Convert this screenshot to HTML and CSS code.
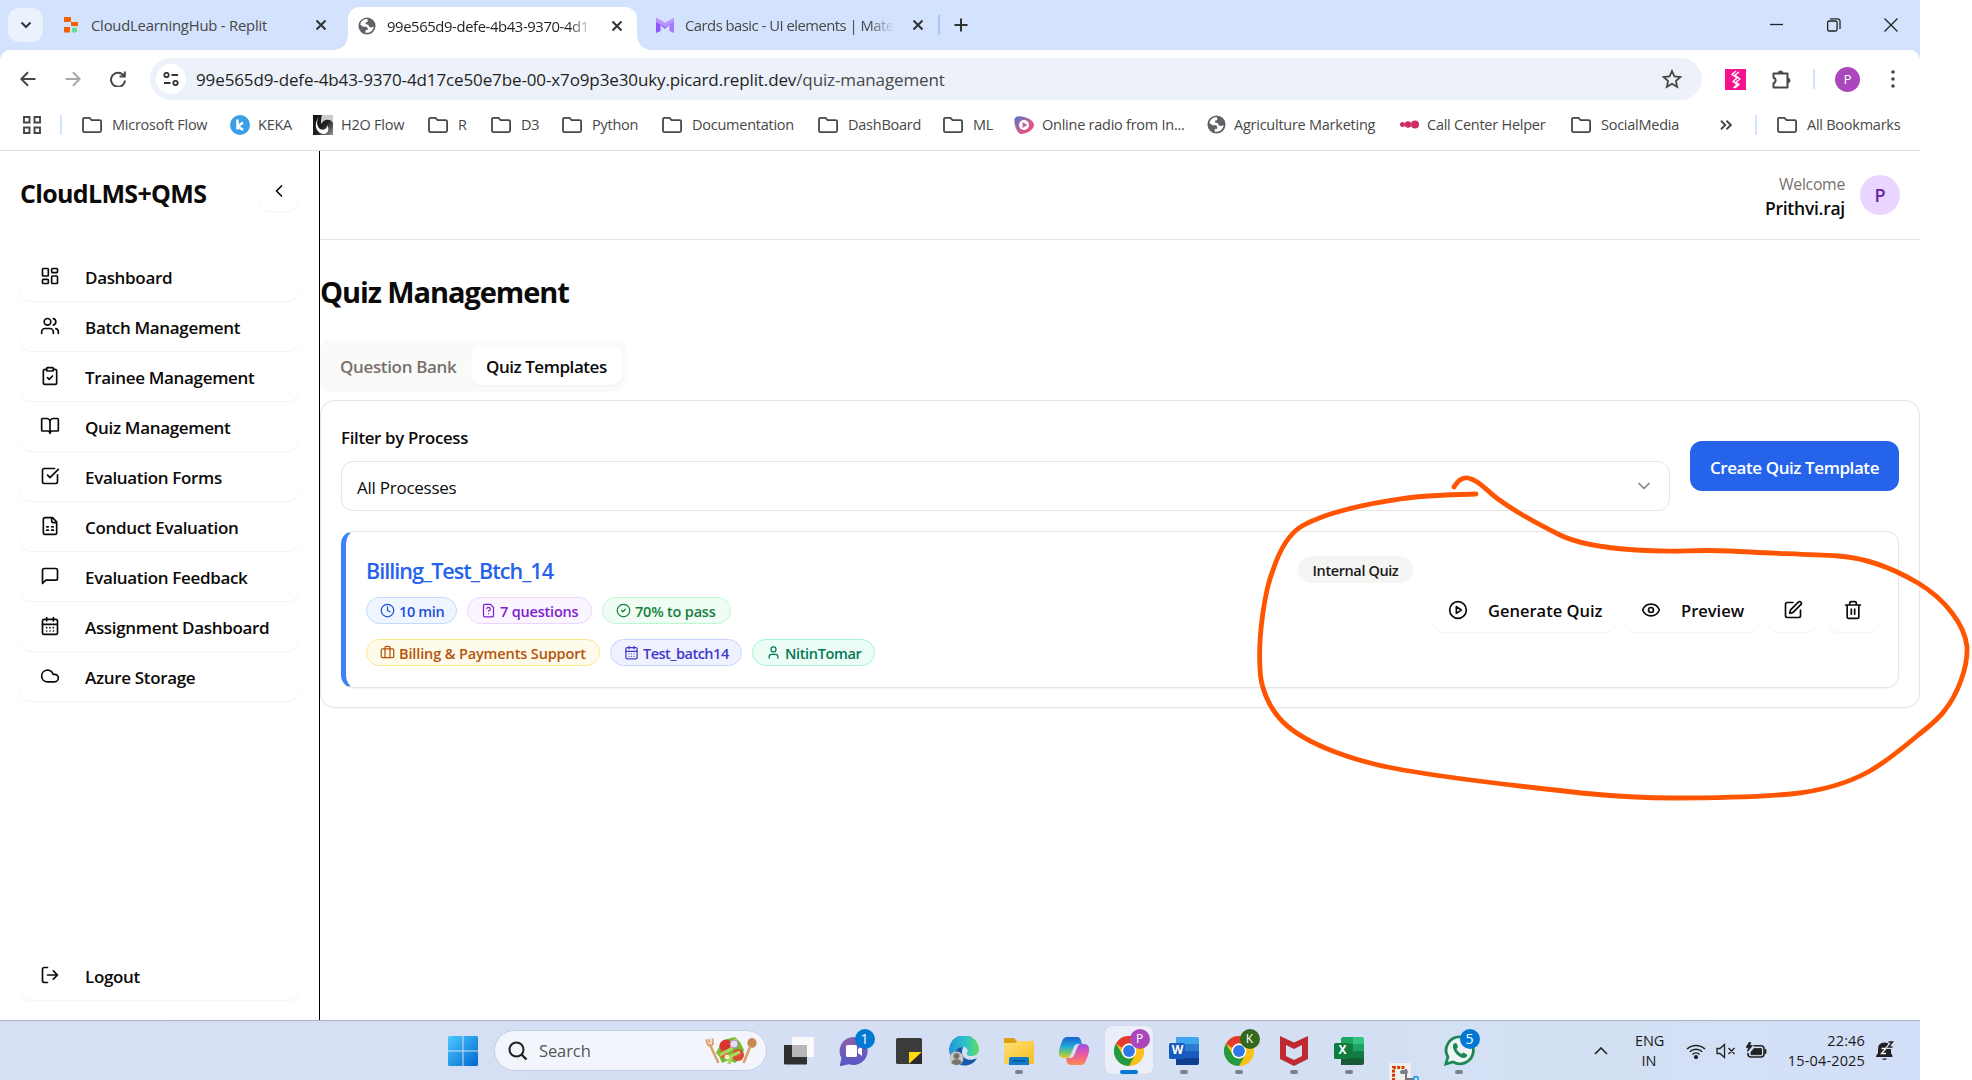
FILE: index.html
```html
<!DOCTYPE html>
<html lang="en">
<head>
<meta charset="utf-8">
<title>Quiz Management</title>
<link rel="stylesheet" href="styles.css">
</head>
<body>
<svg class="sprite" aria-hidden="true">
  <defs>
    <linearGradient id="g-win" x1="0" y1="0" x2="1" y2="1"><stop offset="0" stop-color="#4ccaff"/><stop offset="1" stop-color="#0067cf"/></linearGradient>
    <linearGradient id="g-radio" x1="0" y1="0" x2="1" y2="1"><stop offset="0" stop-color="#5078cc"/><stop offset=".6" stop-color="#d25a8c"/><stop offset="1" stop-color="#f0506e"/></linearGradient>
    <linearGradient id="g-h2o" x1="0" y1="0" x2="1" y2="1"><stop offset="0" stop-color="#111"/><stop offset=".55" stop-color="#222"/><stop offset="1" stop-color="#999"/></linearGradient>
    <linearGradient id="g-chat" x1="0" y1="0" x2="0" y2="1"><stop offset="0" stop-color="#8f5fa8"/><stop offset="1" stop-color="#5558c8"/></linearGradient>
    <linearGradient id="g-edge" x1="0" y1="0" x2="1" y2="0"><stop offset="0" stop-color="#2494d8"/><stop offset=".55" stop-color="#2cc3c9"/><stop offset="1" stop-color="#62de5a"/></linearGradient>
    <linearGradient id="g-fold" x1="0" y1="0" x2="1" y2="1"><stop offset="0" stop-color="#ffe07a"/><stop offset="1" stop-color="#f9bd1d"/></linearGradient>
    <linearGradient id="g-cop1" x1="0" y1="0" x2="0" y2="1"><stop offset="0" stop-color="#1b62cf"/><stop offset=".45" stop-color="#22a8dc"/><stop offset=".8" stop-color="#8bc854"/><stop offset="1" stop-color="#f3c52d"/></linearGradient>
    <linearGradient id="g-cop2" x1="0" y1="0" x2="0" y2="1"><stop offset="0" stop-color="#9c4ce8"/><stop offset=".5" stop-color="#ea5ba0"/><stop offset="1" stop-color="#ff8a4c"/></linearGradient>
  </defs>
  <symbol id="folder" viewBox="0 0 22 18"><path d="M2 3.2C2 2.3 2.6 1.8 3.4 1.8h5l2.2 2.4h8c.9 0 1.5.6 1.5 1.4v9c0 .9-.6 1.5-1.5 1.5H3.4c-.8 0-1.4-.6-1.4-1.5z"/></symbol>
  <symbol id="globe" viewBox="0 0 20 20"><circle cx="10" cy="10" r="9.500" fill="#5f6368"/><path d="M10.500 2.300C6 2 3 5 2.600 8.500l3.200 2.200h3.400l1.600 1.500v2.300l-2.600.3v2.700c5 .8 9-2.500 9.200-7l-2.600 1.200-2.300-.6-1-2.600-2.800-.4-.4-2 2.600-.8z" fill="#fff"/></symbol>
  <symbol id="i-x" viewBox="0 0 12 12"><path d="m1.500 1.500 9 9m0-9-9 9"/></symbol>
  <symbol id="l-dash" viewBox="0 0 24 24"><rect x="3" y="3" width="7" height="9" rx="1"/><rect x="14" y="3" width="7" height="5" rx="1"/><rect x="14" y="12" width="7" height="9" rx="1"/><rect x="3" y="16" width="7" height="5" rx="1"/></symbol>
  <symbol id="l-users" viewBox="0 0 24 24"><path d="M16 21v-2a4 4 0 0 0-4-4H6a4 4 0 0 0-4 4v2"/><circle cx="9" cy="7" r="4"/><path d="M22 21v-2a4 4 0 0 0-3-3.870M16 3.130a4 4 0 0 1 0 7.750"/></symbol>
  <symbol id="l-clip" viewBox="0 0 24 24"><rect x="8" y="2" width="8" height="4" rx="1"/><path d="M16 4h2a2 2 0 0 1 2 2v14a2 2 0 0 1-2 2H6a2 2 0 0 1-2-2V6a2 2 0 0 1 2-2h2m1 10 2 2 4-4"/></symbol>
  <symbol id="l-book" viewBox="0 0 24 24"><path d="M12 7v14M3 18a1 1 0 0 1-1-1V4a1 1 0 0 1 1-1h5a4 4 0 0 1 4 4 4 4 0 0 1 4-4h5a1 1 0 0 1 1 1v13a1 1 0 0 1-1 1h-6a3 3 0 0 0-3 3 3 3 0 0 0-3-3z"/></symbol>
  <symbol id="l-check" viewBox="0 0 24 24"><path d="M21 10.500V19a2 2 0 0 1-2 2H5a2 2 0 0 1-2-2V5a2 2 0 0 1 2-2h12.500M9 11l3 3L22 4"/></symbol>
  <symbol id="l-sheet" viewBox="0 0 24 24"><path d="M15 2H6a2 2 0 0 0-2 2v16a2 2 0 0 0 2 2h12a2 2 0 0 0 2-2V7ZM14 2v4a2 2 0 0 0 2 2h4M8 13h2M14 13h2M8 17h2M14 17h2"/></symbol>
  <symbol id="l-msg" viewBox="0 0 24 24"><path d="M21 15a2 2 0 0 1-2 2H7l-4 4V5a2 2 0 0 1 2-2h14a2 2 0 0 1 2 2z"/></symbol>
  <symbol id="l-cal" viewBox="0 0 24 24"><path d="M8 2v4M16 2v4M3 10h18M8 14h.01M12 14h.01M16 14h.01M8 18h.01M12 18h.01M16 18h.01"/><rect x="3" y="4" width="18" height="18" rx="2"/></symbol>
  <symbol id="l-cloud" viewBox="0 0 24 24"><path d="M17.500 19H9a7 7 0 1 1 6.710-9h1.790a4.500 4.500 0 1 1 0 9Z"/></symbol>
  <symbol id="l-out" viewBox="0 0 24 24"><path d="M9 21H5a2 2 0 0 1-2-2V5a2 2 0 0 1 2-2h4M16 17l5-5-5-5M21 12H9"/></symbol>
  <symbol id="l-clock" viewBox="0 0 24 24"><circle cx="12" cy="12" r="10"/><path d="M12 6v6l4 2"/></symbol>
  <symbol id="l-fileq" viewBox="0 0 24 24"><path d="M12 17h.01M15 2H6a2 2 0 0 0-2 2v16a2 2 0 0 0 2 2h12a2 2 0 0 0 2-2V7zM9.100 9a3 3 0 0 1 5.820 1c0 2-3 3-3 3"/></symbol>
  <symbol id="l-ok" viewBox="0 0 24 24"><circle cx="12" cy="12" r="10"/><path d="m9 12 2 2 4-4"/></symbol>
  <symbol id="l-case" viewBox="0 0 24 24"><path d="M16 20V4a2 2 0 0 0-2-2h-4a2 2 0 0 0-2 2v16"/><rect x="2" y="6" width="20" height="14" rx="2"/></symbol>
  <symbol id="l-user" viewBox="0 0 24 24"><path d="M19 21v-2a4 4 0 0 0-4-4H9a4 4 0 0 0-4 4v2"/><circle cx="12" cy="7" r="4"/></symbol>
  <symbol id="l-play" viewBox="0 0 24 24"><circle cx="12" cy="12" r="10"/><path d="m10 8 6 4-6 4z"/></symbol>
  <symbol id="l-eye" viewBox="0 0 24 24"><path d="M2.062 12.348a1 1 0 0 1 0-.696 10.750 10.750 0 0 1 19.876 0 1 1 0 0 1 0 .696 10.750 10.750 0 0 1-19.876 0"/><circle cx="12" cy="12" r="3"/></symbol>
  <symbol id="l-pen" viewBox="0 0 24 24"><path d="M12 3H5a2 2 0 0 0-2 2v14a2 2 0 0 0 2 2h14a2 2 0 0 0 2-2v-7"/><path d="M18.375 2.625a1 1 0 0 1 3 3l-9.013 9.014a2 2 0 0 1-.853.505l-2.873.840a.5.5 0 0 1-.620-.620l.840-2.873a2 2 0 0 1 .506-.852z"/></symbol>
  <symbol id="l-trash" viewBox="0 0 24 24"><path d="M3 6h18M19 6v14c0 1-1 2-2 2H7c-1 0-2-1-2-2V6M8 6V4c0-1 1-2 2-2h4c1 0 2 1 2 2v2M10 11v6M14 11v6"/></symbol>
  <symbol id="l-down" viewBox="0 0 24 24"><path d="m6 9 6 6 6-6"/></symbol>
  <symbol id="l-left" viewBox="0 0 24 24"><path d="m15 18-6-6 6-6"/></symbol>
  <symbol id="chrome" viewBox="0 0 30 30"><circle cx="15" cy="15" r="15" fill="#fbc116"/><path d="M2 7.500A15 15 0 0 1 28 7.500H15a7.500 7.500 0 0 0-6.800 4.500z" fill="#e33b2e"/><path d="M2 7.500A15 15 0 0 0 15 30l6.500-11.200a7.500 7.500 0 0 1-13 0z" fill="#249a41"/><path d="M15 7.500h13A15 15 0 0 1 15 30l6.500-11.200A7.500 7.500 0 0 0 15 7.500z" fill="#fbc116"/><circle cx="15" cy="15" r="7.400" fill="#fff"/><circle cx="15" cy="15" r="5.900" fill="#2f78ea"/></symbol>
</svg>

<div class="screen">
  <header class="tabstrip">
    <button class="tabsearch"><svg width="12" height="8" viewBox="0 0 12 8"><path d="m1.500 1.500 4.500 4.500 4.500-4.500"/></svg></button>
    <div class="tab tab-a">
      <svg class="fav" width="14" height="16" viewBox="0 0 14 16"><path d="M0 0h7v5H0zM7 5h7v4H7zM0 10h6v5.500H0z" fill="#f26207"/><circle cx="10.500" cy="13" r="2.700" fill="#6bd98a"/></svg>
      <span class="tabtext">CloudLearningHub - Replit</span>
      <svg class="close" width="12" height="12"><use href="#i-x"/></svg>
    </div>
    <div class="tab tab-b">
      <svg class="fav" width="18" height="18"><use href="#globe"/></svg>
      <span class="tabtext fade">99e565d9-defe-4b43-9370-4d1</span>
      <svg class="close" width="12" height="12"><use href="#i-x"/></svg>
    </div>
    <div class="tab tab-c">
      <svg class="fav" width="18" height="15" viewBox="0 0 18 15"><path d="M0 0 9 5v6L4.500 7v6L0 15z" fill="#9155fd"/><path d="m18 0-9 5v6l4.500-4v6l4.500 2z" fill="#a877ff"/><path d="m0 0 9 5 9-5v4L9 9 0 4z" fill="#bb94ff"/></svg>
      <span class="tabtext fade">Cards basic - UI elements | Mate</span>
      <svg class="close" width="12" height="12"><use href="#i-x"/></svg>
    </div>
    <i class="tabsep"></i>
    <svg class="plus" width="14" height="14" viewBox="0 0 14 14"><path d="M7 .5v13M.5 7h13"/></svg>
    <div class="wincontrols">
      <svg width="14" height="14" viewBox="0 0 14 14"><path d="M0 6.500h13"/></svg>
      <svg width="14" height="14" viewBox="0 0 14 14"><rect x=".6" y="3" width="9.500" height="10" rx="1.500"/><path d="M3 .8h7.500A2.500 2.500 0 0 1 13 3.300V11"/></svg>
      <svg width="14" height="14" viewBox="0 0 14 14"><path d="m.5.5 13 13m0-13-13 13"/></svg>
    </div>
  </header>

  <div class="toolbar">
    <svg class="tb" width="16" height="16" viewBox="0 0 16 16"><path d="M15.500 8H1.500M8 1.200 1.300 8 8 14.800"/></svg>
    <svg class="tb off" width="16" height="16" viewBox="0 0 16 16"><path d="M.5 8h14M8 1.200 14.700 8 8 14.800"/></svg>
    <svg class="tb" width="16" height="16" viewBox="0 0 16 16"><path d="M13.800 4.800A7 7 0 1 0 15 9.500M14.800.5v5H9.500"/></svg>
    <div class="omnibox">
      <span class="site"><svg width="16" height="14" viewBox="0 0 16 14"><path d="M8.500 3H15M1 11h6.500"/><circle cx="3.500" cy="3" r="2.200"/><circle cx="12.500" cy="11" r="2.200"/></svg></span>
      <span class="url">99e565d9-defe-4b43-9370-4d17ce50e7be-00-x7o9p3e30uky.picard.replit.dev<span>/quiz-management</span></span>
      <svg class="star" width="20" height="20" viewBox="0 0 20 20"><path d="m10 2 2.400 5.500 6 .5-4.500 4 1.300 5.800L10 14.700l-5.200 3.100L6.100 12 1.600 8l6-.5z"/></svg>
    </div>
    <svg class="pink" width="21" height="21" viewBox="0 0 21 21"><path d="M0 0h21v21H0z" fill="#f5128c"/><path d="m11 2-4 3.500 5 3.500-4 3.500 4 3-3.500 3.500M14 3l-4 3 5 4-4 3 3 2.500-4 3.500" fill="none" stroke="#fff" stroke-width="1.300"/></svg>
    <svg class="puzzle" width="21" height="21" viewBox="0 0 21 21"><path d="M2.500 4.500h14v14h-14v-4.300a2.800 2.800 0 0 0 0-5.400z" fill="none" stroke="#474747" stroke-width="2" stroke-linejoin="round"/><path d="M7 4.500a2.500 2.500 0 0 1 5 0zM16.500 9a2.500 2.500 0 0 1 0 5z" fill="#474747" stroke="#474747"/></svg>
    <i class="vsep"></i>
    <span class="profile">P</span>
    <svg class="dots" width="6" height="18" viewBox="0 0 6 18"><circle cx="3" cy="2" r="1.800"/><circle cx="3" cy="9" r="1.800"/><circle cx="3" cy="16" r="1.800"/></svg>
  </div>

  <nav class="bookmarks">
    <svg class="apps" width="18" height="18" viewBox="0 0 18 18"><path d="M1 1h5.500v5.500H1zM11.500 1H17v5.500h-5.500zM1 11.500h5.500V17H1zM11.500 11.500H17V17h-5.500z"/></svg>
    <i class="vsep"></i>
    <a><svg class="fo"><use href="#folder"/></svg>Microsoft Flow</a>
    <a class="site-bm"><svg width="20" height="20" viewBox="0 0 20 20"><circle cx="10" cy="10" r="10" fill="#3a9fe6"/><path d="M7.500 4.500v10M13 7.500l-5 3.800 5 3.700" stroke="#fff" stroke-width="2.500" fill="none"/></svg>KEKA</a>
    <a class="site-bm"><svg width="20" height="20" viewBox="0 0 20 20"><path d="M0 0h20v20H0z" fill="url(#g-h2o)"/><path d="M8 0C3 4 3 11 7 14c4 2 8-1 7-4 3 4 1 9-4 9C3 18-1 8 8 0z" fill="#fff"/><path d="M9 0h11v8c-3-5-9-4-12 1C8 5 8 3 9 0z" fill="#ccc"/></svg>H2O Flow</a>
    <a><svg class="fo"><use href="#folder"/></svg>R</a>
    <a><svg class="fo"><use href="#folder"/></svg>D3</a>
    <a><svg class="fo"><use href="#folder"/></svg>Python</a>
    <a><svg class="fo"><use href="#folder"/></svg>Documentation</a>
    <a><svg class="fo"><use href="#folder"/></svg>DashBoard</a>
    <a><svg class="fo"><use href="#folder"/></svg>ML</a>
    <a class="site-bm"><svg width="20" height="18" viewBox="0 0 20 18"><path d="M3 .5C8-1 20 3 20 9c0 5-8 9-13 9C2 17-1 5 1 2z" fill="url(#g-radio)"/><circle cx="10" cy="9" r="5" fill="#fff"/><path d="m8.500 6 5 3-5 3z" fill="#b96aa0"/></svg>Online radio from In...</a>
    <a class="site-bm"><svg width="19" height="19"><use href="#globe"/></svg>Agriculture Marketing</a>
    <a class="site-bm"><svg width="19" height="19" viewBox="0 0 19 19"><circle cx="2.500" cy="9.500" r="2.500" fill="#cf2e63"/><circle cx="8" cy="9.500" r="3.200" fill="#cf2e63"/><circle cx="15" cy="9.500" r="4" fill="#cf2e63"/></svg>Call Center Helper</a>
    <a><svg class="fo"><use href="#folder"/></svg>SocialMedia</a>
    <svg class="more" width="12" height="10" viewBox="0 0 12 10"><path d="m1 .8 4.300 4.200L1 9.200M6.500.8 10.800 5 6.500 9.200"/></svg>
    <i class="vsep"></i>
    <a><svg class="fo"><use href="#folder"/></svg>All Bookmarks</a>
  </nav>

  <div class="app">
    <aside class="sidebar">
      <div class="brand"><strong>CloudLMS+QMS</strong><button class="raised collapse"><svg class="lu"><use href="#l-left"/></svg></button></div>
      <ul class="menu">
        <li class="raised"><svg class="lu"><use href="#l-dash"/></svg><span>Dashboard</span></li>
        <li class="raised"><svg class="lu"><use href="#l-users"/></svg><span>Batch Management</span></li>
        <li class="raised"><svg class="lu"><use href="#l-clip"/></svg><span>Trainee Management</span></li>
        <li class="raised"><svg class="lu"><use href="#l-book"/></svg><span>Quiz Management</span></li>
        <li class="raised"><svg class="lu"><use href="#l-check"/></svg><span>Evaluation Forms</span></li>
        <li class="raised"><svg class="lu"><use href="#l-sheet"/></svg><span>Conduct Evaluation</span></li>
        <li class="raised"><svg class="lu"><use href="#l-msg"/></svg><span>Evaluation Feedback</span></li>
        <li class="raised"><svg class="lu"><use href="#l-cal"/></svg><span>Assignment Dashboard</span></li>
        <li class="raised"><svg class="lu"><use href="#l-cloud"/></svg><span>Azure Storage</span></li>
        <li class="raised logout"><svg class="lu"><use href="#l-out"/></svg><span>Logout</span></li>
      </ul>
    </aside>

    <main class="main">
      <div class="userbar">
        <div class="who"><span>Welcome</span><b>Prithvi.raj</b></div>
        <span class="avatar">P</span>
      </div>
      <h1>Quiz Management</h1>
      <div class="tabs"><span>Question Bank</span><span class="on">Quiz Templates</span></div>
      <section class="panel">
        <div class="filter">
          <div class="field">
            <label>Filter by Process</label>
            <div class="select"><span>All Processes</span><svg class="lu"><use href="#l-down"/></svg></div>
          </div>
          <button class="primary">Create Quiz Template</button>
        </div>
        <article class="quiz">
          <div class="info">
            <h3>Billing_Test_Btch_14</h3>
            <div class="badges">
              <span class="badge blue w-min"><svg class="lu"><use href="#l-clock"/></svg><span>10 min</span></span>
              <span class="badge purple w-ques"><svg class="lu"><use href="#l-fileq"/></svg><span>7 questions</span></span>
              <span class="badge green w-pass"><svg class="lu"><use href="#l-ok"/></svg><span>70% to pass</span></span>
            </div>
            <div class="badges">
              <span class="badge amber w-proc"><svg class="lu"><use href="#l-case"/></svg><span>Billing &amp; Payments Support</span></span>
              <span class="badge indigo w-batch"><svg class="lu"><use href="#l-cal"/></svg><span>Test_batch14</span></span>
              <span class="badge emerald w-name"><svg class="lu"><use href="#l-user"/></svg><span>NitinTomar</span></span>
            </div>
          </div>
          <div class="side">
            <span class="kind">Internal Quiz</span>
            <div class="actions">
              <button class="raised gen"><svg class="lu"><use href="#l-play"/></svg><span>Generate Quiz</span></button>
              <button class="raised prev"><svg class="lu"><use href="#l-eye"/></svg><span>Preview</span></button>
              <button class="raised sq"><svg class="lu"><use href="#l-pen"/></svg></button>
              <button class="raised sq"><svg class="lu"><use href="#l-trash"/></svg></button>
            </div>
          </div>
        </article>
      </section>
    </main>
  </div>

  <footer class="taskbar">
    <div class="cell start"><svg width="30" height="30" viewBox="0 0 30 30"><path d="M1.500 0h13v14.500H0v-13A1.500 1.500 0 0 1 1.500 0zM15.500 0h13A1.500 1.500 0 0 1 30 1.500v13H15.500zM0 15.500h14.500V30h-13A1.500 1.500 0 0 1 0 28.500zM15.500 15.500H30v13a1.500 1.500 0 0 1-1.500 1.500h-13z" fill="url(#g-win)"/></svg></div>
    <div class="search">
      <svg width="20" height="20" viewBox="0 0 20 20"><circle cx="8.500" cy="8.500" r="7" fill="none" stroke="#222" stroke-width="2"/><path d="m13.500 13.500 5 5" stroke="#222" stroke-width="2.400"/></svg>
      <span>Search</span>
      <svg class="salad" width="52" height="28" viewBox="0 0 52 28"><path d="m5 8 8 17" stroke="#dca06c" stroke-width="2.600" stroke-linecap="round"/><path d="M1 2.500 3 8q3 2 5-1l-.5-5.500M3.500 2l1.500 4" stroke="#dca06c" stroke-width="2" fill="none"/><ellipse cx="47" cy="6" rx="4.600" ry="5" fill="#c98850"/><path d="m45 10-6 15" stroke="#dca06c" stroke-width="2.600" stroke-linecap="round"/><path d="m11 16 5-10 6-4 8-2 5 5 4 8-3 7-6 6-6-3-7 3-3-7z" fill="#78b833"/><circle cx="21" cy="9" r="6.500" fill="#d9352b"/><circle cx="33" cy="18" r="6" fill="#dd4a33"/><circle cx="19" cy="17" r="4" fill="#e5533f"/><path d="m15 18 11-6 5-10M24 27l2-8 9-4" stroke="#a9d65c" stroke-width="3.500" fill="none"/><circle cx="29" cy="7" r="4" fill="#e8ddee" stroke="#b58bc4"/><circle cx="22" cy="20" r="2.500" fill="#f5f2c4"/></svg>
    </div>
    <div class="cell"><svg width="30" height="28" viewBox="0 0 30 28"><path d="M0 8h23v18.500a1 1 0 0 1-1 1H1a1 1 0 0 1-1-1z" fill="#303030"/><path d="M8 0h21a1 1 0 0 1 1 1v19H8z" fill="#fafafa"/><path d="M8 8h15v12H8z" fill="#b7b7b7"/></svg></div>
    <div class="cell"><svg width="30" height="30" viewBox="0 0 30 30"><path d="M15 1a14 14 0 1 1-5 27.200L2 30c-1 0-1.300-.5-1-1.500L2.500 22A14 14 0 0 1 15 1z" fill="url(#g-chat)"/><rect x="7" y="9" width="11" height="12" rx="1.500" fill="#fff"/><path d="m19 13 4-3v10l-4-3z" fill="#fff"/></svg><b class="count">1</b></div>
    <div class="cell"><svg width="26" height="26" viewBox="0 0 26 26"><rect width="26" height="26" rx="1.500" fill="#3b3b3b"/><path d="M13 14h13L13 26z" fill="#ffda0f"/><path d="M26 14v12H13z" fill="#2b2b2b"/></svg></div>
    <div class="cell"><svg width="30" height="30" viewBox="0 0 30 30"><path d="M0 15A15 15 0 0 1 30 13c.3 5-4 7-8 7-3 0-5-1-4-3 1.500-3 0-6-4-6C7 11 3 18 3 22A15 15 0 0 1 0 15z" fill="url(#g-edge)"/><path d="M14 11c-8 0-12 9-8 14 4 6 17 7 22-3-9 5-18-1-14-11z" fill="#155aa8"/><circle cx="7.500" cy="22.500" r="7" fill="#c9c6c2"/><circle cx="7.500" cy="20" r="3" fill="#77736f"/><path d="M2.500 27c0-5 10-5 10 0-3 2.500-7 2.500-10 0z" fill="#77736f"/></svg></div>
    <div class="cell run"><svg width="30" height="28" viewBox="0 0 30 28"><path d="M0 7V2Q0 1 1 1h9l3 3H29q1 0 1 1v4z" fill="#dca012"/><path d="M0 6h11l2-2h16q1 0 1 1v22H1q-1 0-1-1z" fill="url(#g-fold)"/><path d="M5 28v-6q0-2 2-2h16q2 0 2 2v6z" fill="#1179cb"/><path d="M8.500 24h13" stroke="#0a4a8a" stroke-width="1.200"/></svg></div>
    <div class="cell"><svg width="30" height="28" viewBox="0 0 30 28"><path d="M8 0h10c4 0 4 4 5 7h-4c-3 0-4 2-5 5l-3 7c-1 2-3 2-5 2-7 0-7-5-5-11C3 4 4 0 8 0z" fill="url(#g-cop1)"/><path d="M22 28H12c-4 0-4-3-5-7h4c3 0 4-2 5-5l3-7c1-2 3-2 5-2 7 0 7 5 5 11-2 6-3 10-7 10z" fill="url(#g-cop2)"/></svg></div>
    <div class="cell active"><svg width="30" height="30"><use href="#chrome"/></svg><b class="count pp">P</b></div>
    <div class="cell run"><svg width="30" height="30" viewBox="0 0 30 30"><path d="M7 1h21q2 0 2 2v5H7z" fill="#41a5ee"/><path d="M7 8h23v7H7z" fill="#2b7cd3"/><path d="M7 15h23v7H7z" fill="#185abd"/><path d="M7 22h23v5q0 2-2 2H7z" fill="#103f91"/><rect y="7" width="16" height="16" rx="1.500" fill="#185abd"/></svg><em>W</em></div>
    <div class="cell run"><svg width="30" height="30"><use href="#chrome"/></svg><b class="count kk">K</b></div>
    <div class="cell run"><svg width="28" height="30" viewBox="0 0 28 30"><path d="m0 0 14 6.500L28 0v23l-14 7-14-7zm6 9v11l8 4 8-4V9l-8 4z" fill="#bf2a31"/></svg></div>
    <div class="cell run"><svg width="30" height="30" viewBox="0 0 30 30"><path d="M7 3q0-2 2-2h10v7H7z" fill="#21a366"/><path d="M19 1h9q2 0 2 2v5H19z" fill="#33c481"/><path d="M7 8h12v14H7z" fill="#107c41"/><path d="M19 8h11v7H19z" fill="#21a366"/><path d="M19 15h11v7H19z" fill="#107c41"/><path d="M7 22h23v5q0 2-2 2H7z" fill="#185c37"/><rect y="7" width="16" height="16" rx="1.500" fill="#107c41"/></svg><em>X</em></div>
    <div class="cell run snip"><svg width="30" height="17" viewBox="0 0 30 17"><path d="M0 1q0-1 1-1h20q1 0 1 1v16H0z" fill="#f0eeee"/><path d="M15.500 4.500h-11V17" fill="none" stroke="#d83b01" stroke-width="3" stroke-dasharray="3 1.300"/><path d="M17 6v10h8" fill="none" stroke="#777" stroke-width="2"/><circle cx="27" cy="16" r="2.300" fill="none" stroke="#1ca4e8" stroke-width="1.800"/></svg></div>
    <div class="cell run"><svg width="31" height="31" viewBox="0 0 31 31"><path d="M16 1.800a13.500 13.500 0 1 1-7 25.100L1.800 29l2.100-7A13.500 13.500 0 0 1 16 1.800z" fill="#eef4f4" stroke="#1b8755" stroke-width="2.800"/><path d="M9 10c1-2 3-3 4-1l1 3-1.500 2c1 2 3 4 5 5l2-1.500 3.500 2c1 1-1 3.500-3.500 3.500C14 22.500 8 15 9 10z" fill="#1b8755"/></svg><b class="count">5</b></div>

    <div class="tray">
      <svg width="14" height="8" viewBox="0 0 14 8"><path d="m1 7 6-6 6 6"/></svg>
      <div class="lang">ENG<br>IN</div>
      <svg class="wifi" width="20" height="16" viewBox="0 0 20 16"><path d="M1 6a13 13 0 0 1 18 0M3.800 8.800a9 9 0 0 1 12.400 0M6.500 11.500a5 5 0 0 1 7 0" stroke-width="1.500"/><circle cx="10" cy="14" r="1.300" fill="#222"/></svg>
      <svg class="vol" width="20" height="16" viewBox="0 0 20 16"><path d="M1 5.500v5h3l4.500 4V1.500L4 5.500zM12.500 5l6 6m0-6-6 6" stroke-width="1.300"/></svg>
      <svg class="bat" width="21" height="17" viewBox="0 0 21 17"><path d="M7.500 3.700H15a3 3 0 0 1 3 3V12a3 3 0 0 1-3 3H5a3 3 0 0 1-3-3v-1"/><path d="M5 12.700V10l3-3.500h7.500v6.200zM19 7.500v4h1v-4zM3.500 0 0 5.500h2.500L1.500 9.500 6.500 3.500H4L4.500 0z" fill="#222" stroke-width=".8"/></svg>
      <div class="clock">22:46<br>15-04-2025</div>
      <svg class="bell" width="18" height="20" viewBox="0 0 18 20"><path d="M0 16v-1l2-3V8q0-6.500 6.500-6.500Q15 1.500 15 8v4l1.500 3v1zM6 17.500h5q-2.500 3-5 0z" fill="#222" stroke="none"/><path d="M5.500 7.500h4.500l-4.500 5h4.500" stroke="#fff" stroke-width="1.300"/><path d="M12.500 1h4L12.500 6h4" stroke="#d3dff8" stroke-width="4"/><path d="M12.500 1h4L12.500 6h4" stroke-width="1.500"/></svg>
    </div>
  </footer>
</div>

<svg class="ink" width="1972" height="1080" viewBox="0 0 1972 1080"><path d="M1454 487C1458 480 1462 477 1468 478C1479 480 1487 491 1498 499C1517 513 1540 525 1558 534C1577 544 1604 548 1636 550C1680 553 1690 549 1730 551C1765 553 1800 554 1838 556C1868 558 1896 570 1918 583C1945 599 1965 625 1967 647C1968 668 1957 695 1945 710C1938 720 1928 727 1917 736C1904 747 1886 762 1868 772C1846 784 1820 791 1791 794C1755 797 1715 798 1674 798C1640 798 1612 796 1581 793C1520 786 1460 780 1403 770C1355 762 1305 744 1283 722C1267 706 1260 684 1260 668C1258 635 1265 590 1273 570C1280 549 1290 533 1302 526C1332 509 1380 502 1400 499C1425 495 1450 495 1476 494"/></svg>
</body>
</html>
```
FILE: styles.css
```css
* { box-sizing: border-box; }
body {
  margin: 0;
  width: 1972px;
  height: 1080px;
  overflow: hidden;
  background: #fff;
  color: #0c0a09;
  font-family: "Open Sans", "Noto Sans", sans-serif;
  font-size: 17px;
}
button { font: inherit; border: 0; padding: 0; background: none; color: inherit; }
svg { display: block; flex: none; }
.sprite { position: absolute; width: 0; height: 0; }
.screen { width: 1920px; height: 1080px; display: flex; flex-direction: column; }

/* browser tab strip */
.tabstrip { height: 50px; background: #d3e2fd; display: flex; align-items: center; padding-left: 8px; font-size: 14.800px; letter-spacing: -0.2px; color: #474747; }
.tabsearch { width: 35px; height: 34px; border-radius: 11px; background: #ebf1fd; display: grid; place-items: center; }
.tabsearch path, .close, .plus { fill: none; stroke: #333; stroke-width: 2; }
.tab { display: flex; align-items: center; white-space: nowrap; }
.tab .fav { margin-right: 11px; }
.tabtext { flex: 1; margin-right: 18px; }
.fade { -webkit-mask-image: linear-gradient(90deg, #000 88%, transparent); mask-image: linear-gradient(90deg, #000 88%, transparent); }
.tab-a { width: 263px; margin-left: 21px; }
.tab-a .fav { margin-right: 13px; }
.tab-b { align-self: flex-end; position: relative; width: 289px; height: 43px; margin-left: 21px; padding: 0 14px 6px 10px; background: #fff; border-radius: 12px 12px 0 0; color: #1f1f1f; }
.tab-b .tabtext { letter-spacing: -0.38px; }
.tab-b::before, .tab-b::after { content: ""; position: absolute; bottom: 0; width: 14px; height: 14px; }
.tab-b::before { left: -14px; background: radial-gradient(circle at 0 0, transparent 13.500px, #fff 14px); }
.tab-b::after { right: -14px; background: radial-gradient(circle at 100% 0, transparent 13.500px, #fff 14px); }
.tab-c { width: 265px; margin-left: 19px; }
.tab-c .tabtext { letter-spacing: -0.5px; }
.tabsep { width: 2px; height: 20px; background: #a8c7fa; margin-left: 17px; }
.plus { margin-left: 14px; }
.wincontrols { margin-left: auto; margin-right: 22px; display: flex; gap: 43px; }
.wincontrols svg { fill: none; stroke: #222; stroke-width: 1.300; }

/* browser toolbar */
.toolbar { height: 58px; display: flex; align-items: center; padding: 0 0 0 20px; background: linear-gradient(#d3e2fd, #d3e2fd) 0 0 / 100% 8px no-repeat; position: relative; }
.toolbar::before { content: ""; position: absolute; inset: 0; background: #fff; border-radius: 10px 10px 0 0; }
.toolbar > * { position: relative; }
.tb { margin-right: 29px; fill: none; stroke: #474747; stroke-width: 2; }
.tb.off { stroke: #a9a9a9; }
.tb:nth-of-type(3) { margin-right: 24px; }
.omnibox { width: 1552px; height: 42px; border-radius: 21px; background: #ecf1fa; display: flex; align-items: center; padding: 0 20px 0 6px; }
.site { width: 30px; height: 30px; border-radius: 50%; background: #fff; display: grid; place-items: center; }
.site svg { fill: none; stroke: #333; stroke-width: 1.800; }
.url { flex: 1; margin-left: 10px; font-size: 17px; letter-spacing: -0.12px; color: #1f1f1f; white-space: nowrap; }
.url span { color: #474747; }
.star { fill: none; stroke: #474747; stroke-width: 1.800; }
.pink { margin-left: 23px; }
.puzzle { margin-left: 25px; }
.vsep { width: 2px; height: 20px; background: #d3e2fd; }
.toolbar .vsep { margin-left: 21px; }
.profile { margin-left: 20px; width: 25px; height: 25px; border-radius: 50%; background: #ab47bc; color: #fff; font-size: 13.500px; text-align: center; line-height: 25px; }
.dots { margin-left: 30px; fill: #474747; }

/* bookmarks bar */
.bookmarks {
  height: 43px; border-bottom: 1px solid #dfe1e3; padding: 0 0 9px 23px; align-items: center;
  display: grid;
  grid-template-columns: 37px 21px 149px 83px 114px 63px 71px 100px 156px 125px 72px 193px 193px 170px 150px 35px 21px 140px;
  font-size: 14.500px; letter-spacing: -0.25px; color: #474747;
}
.bookmarks a { display: flex; align-items: center; gap: 10px; white-space: nowrap; }
.bookmarks a.site-bm { gap: 8px; }
.apps, .more { fill: none; stroke: #474747; stroke-width: 1.900; }
.fo { width: 22px; height: 18px; fill: none; stroke: #474747; stroke-width: 1.800; margin-right: -1px; }

/* application */
.app { height: 869px; display: flex; background: #fff; }
.lu { width: 20px; height: 20px; fill: none; stroke: currentColor; stroke-width: 2; stroke-linecap: round; stroke-linejoin: round; }
.raised { border-radius: 12px; box-shadow: 0 1px 2px rgba(0, 0, 0, .06); }
.sidebar { width: 320px; border-right: 1px solid #000; padding: 20px 20px 20px; display: flex; flex-direction: column; }
.brand { display: flex; justify-content: space-between; align-items: center; height: 40px; }
.brand strong { font-size: 25px; font-weight: 700; letter-spacing: -0.67px; padding-top: 3px; }
.collapse { width: 40px; height: 40px; display: grid; place-items: center; }
.menu { list-style: none; margin: 40px 0 0; padding: 0; flex: 1; display: flex; flex-direction: column; }
.menu li { height: 50px; padding-left: 20px; display: flex; align-items: center; gap: 25px; font-weight: 600; letter-spacing: -0.33px; }
.menu span { padding-top: 3px; }
.menu .logout { margin-top: auto; }

.main { flex: 1; min-width: 0; }
.userbar { height: 89px; border-bottom: 1px solid #e5e7eb; display: flex; align-items: center; justify-content: flex-end; gap: 15px; padding: 2px 20px 0 0; }
.who { display: flex; flex-direction: column; align-items: flex-end; line-height: 24px; }
.who span { font-size: 15.800px; letter-spacing: -0.3px; color: #78716c; }
.who b { font-size: 17.500px; font-weight: 600; letter-spacing: -0.25px; }
.avatar { width: 40px; height: 40px; margin-top: -2px; border-radius: 50%; background: #e9d5ff; color: #6b21a8; font-size: 18px; font-weight: 600; display: grid; place-items: center; }
h1 { margin: 30px 0 0; height: 40px; line-height: 43px; font-size: 29px; font-weight: 700; letter-spacing: -1.07px; }
.tabs { margin-top: 30px; width: 307px; height: 50px; border-radius: 12px; background: #fafaf9; display: flex; align-items: center; padding: 5px; font-weight: 600; letter-spacing: -0.45px; color: #78716c; box-shadow: 0 1px 2px rgba(0, 0, 0, .05); }
.tabs span { height: 40px; line-height: 43px; padding: 0 15px; width: 146px; white-space: nowrap; }
.tabs span:first-child { letter-spacing: -0.35px; }
.tabs .on { width: 151px; background: #fff; color: #0c0a09; border-radius: 10px; box-shadow: 0 1px 2px rgba(0, 0, 0, .06); }

.panel { margin-top: 10px; height: 308px; border: 1px solid #e5e5e5; border-radius: 15px; padding: 20px; box-shadow: 0 1px 2px rgba(0, 0, 0, .05); }
.filter { display: flex; gap: 20px; align-items: center; height: 90px; }
.field { flex: 1; }
.field label { display: block; height: 40px; line-height: 34px; font-size: 16.800px; font-weight: 600; letter-spacing: -0.3px; }
.select { height: 50px; border: 1px solid #e5e5e5; border-radius: 12px; padding: 0 15px; display: flex; align-items: center; justify-content: space-between; letter-spacing: -0.25px; }
.select span { padding-top: 3px; }
.select .lu { opacity: .5; }
.primary { width: 209px; height: 50px; border-radius: 12px; background: #2563eb; color: #fff; font-weight: 600; letter-spacing: -0.42px; padding-top: 3px; white-space: nowrap; }
.quiz { margin-top: 20px; height: 157px; border: 1px solid #e5e5e5; border-left: 5px solid #3b82f6; border-radius: 13px; padding: 20px; display: flex; justify-content: space-between; box-shadow: 0 1px 2px rgba(0, 0, 0, .05); }
h3 { margin: 0; height: 45px; line-height: 38px; font-size: 21.500px; font-weight: 600; letter-spacing: -0.96px; color: #2563eb; }
.badges { display: flex; gap: 10px; margin-bottom: 15px; }
.badge { height: 27px; border: 1px solid; border-radius: 14px; padding: 0 13px; display: flex; align-items: center; gap: 4px; font-size: 14.500px; font-weight: 600; letter-spacing: -0.35px; white-space: nowrap; }
.badge span { padding-top: 2px; }
.badge .lu { width: 15px; height: 15px; }
.blue { color: #1d4ed8; background: #eff6ff; border-color: #bfdbfe; }
.purple { color: #7e22ce; background: #faf5ff; border-color: #e9d5ff; letter-spacing: -0.2px; }
.green { color: #15803d; background: #f0fdf4; border-color: #bbf7d0; letter-spacing: -0.2px; }
.amber { color: #b45309; background: #fffbeb; border-color: #fde68a; letter-spacing: -0.13px; }
.indigo { color: #4338ca; background: #eef2ff; border-color: #c7d2fe; letter-spacing: -0.5px; }
.emerald { color: #047857; background: #ecfdf5; border-color: #a7f3d0; letter-spacing: -0.35px; }
.w-min { width: 91px; } .w-ques { width: 125px; } .w-pass { width: 129px; }
.w-proc { width: 234px; } .w-batch { width: 132px; } .w-name { width: 123px; }
.side { width: 580px; padding-top: 4px; }
.kind { display: block; width: 115px; height: 27px; border-radius: 14px; background: #f5f5f4; text-align: center; font-size: 14.500px; line-height: 29px; font-weight: 600; letter-spacing: -0.4px; color: #1c1917; }
.actions { display: flex; justify-content: flex-end; gap: 10px; margin-top: 4px; font-size: 16.500px; font-weight: 600; letter-spacing: -0.45px; }
.actions button { height: 45px; display: flex; align-items: center; gap: 20px; }
.actions span { padding-top: 2px; white-space: nowrap; }
.gen { width: 183px; padding-left: 15px; }
.prev { width: 132px; padding-left: 15px; }
.sq { width: 50px; justify-content: center; }

/* taskbar */
.taskbar { height: 60px; border-top: 1px solid #a9b0bf; background: linear-gradient(90deg, #d6dff3, #d5dff4 60%, #d3e0f4 85%, #d3dff8); display: flex; align-items: center; padding-left: 435px; }
.cell { position: relative; width: 55px; height: 59px; display: grid; place-items: center; }
.cell.active::before { content: ""; position: absolute; left: 3px; top: 5px; width: 48px; height: 48px; border-radius: 6px; background: #e9eef9; box-shadow: 0 0 1px #aab; }
.cell svg { position: relative; }
.run::after, .active::after { content: ""; position: absolute; left: 23px; bottom: 6px; width: 8px; height: 4px; border-radius: 2px; background: #7d818b; }
.active::after { left: 18px; width: 18px; background: #0078d4; }
.count { position: absolute; left: 28px; top: 8px; width: 20px; height: 20px; border-radius: 50%; background: #0078d4; color: #fff; font-size: 14px; font-weight: 400; line-height: 20px; text-align: center; }
.pp { background: #ab47bc; font-size: 12px; }
.kk { background: #33691e; font-size: 12px; }
.cell em { position: absolute; left: 13px; top: 21px; width: 16px; color: #fff; font-style: normal; font-weight: 700; font-size: 12px; line-height: 16px; text-align: center; }
.snip { align-items: end; }
.search { width: 273px; height: 41px; margin: 0 4.500px 0 4px; border-radius: 21px; border: 1px solid #c5cfe4; background: #f2f5fc; display: flex; align-items: center; padding: 0 9px 0 13px; font-size: 16.500px; letter-spacing: -0.1px; color: #555; }
.search span { margin-left: 11px; flex: 1; }
.tray { margin-left: auto; margin-right: 26px; display: flex; align-items: center; font-size: 14.500px; line-height: 20px; letter-spacing: -0.1px; color: #1b1b1b; }
.tray svg { fill: none; stroke: #222; stroke-width: 1.600; }
.lang { width: 28px; margin-left: 27px; text-align: center; }
.wifi { margin-left: 23px; }
.vol { margin-left: 10px; }
.bat { margin-left: 10px; }
.clock { width: 98px; text-align: right; letter-spacing: 0.15px; }
.bell { margin-left: 11px; }

/* freehand highlight drawn over the window */
.ink { position: absolute; left: 0; top: 0; fill: none; stroke: #ff5500; stroke-width: 4.800; stroke-linecap: round; pointer-events: none; }
```
